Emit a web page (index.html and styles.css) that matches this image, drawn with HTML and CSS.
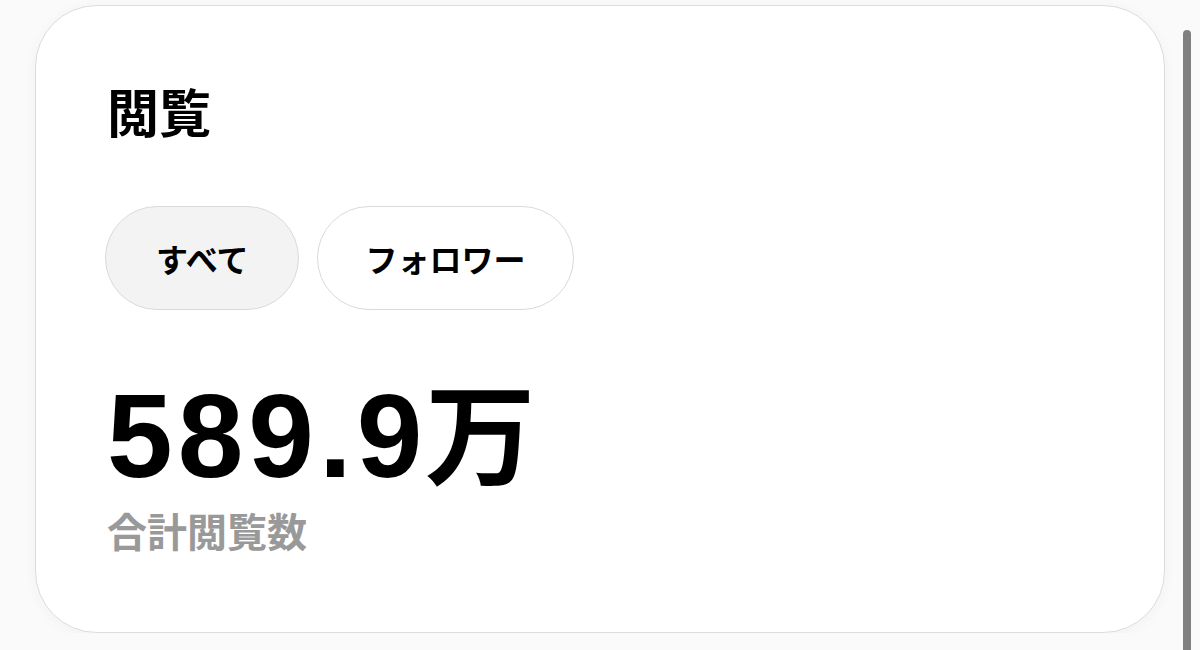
FILE: index.html
```html
<!DOCTYPE html>
<html lang="ja">
<head>
<meta charset="utf-8">
<link rel="stylesheet" href="styles.css">
</head>
<body>
<div class="page">
  <section class="card">
    <h1 class="title">閲覧</h1>
    <div class="tabs">
      <button class="tab active">すべて</button>
      <button class="tab">フォロワー</button>
    </div>
    <div class="value"><span class="num">589.9</span><span class="unit">万</span></div>
    <div class="label">合計閲覧数</div>
  </section>
</div>
<div class="scrollbar"></div>
</body>
</html>
```
FILE: styles.css
```css
html, body {
  margin: 0;
  padding: 0;
  background: #fafafa;
  font-family: "Noto Sans CJK JP", "Noto Sans", sans-serif;
  overflow: hidden;
}
.page {
  padding: 5px 35px 0 35px;
  width: 1130px;
}
.card {
  box-sizing: border-box;
  width: 1130px;
  height: 628px;
  background: #fff;
  border: 1px solid #dcdcdc;
  border-radius: 62px;
  box-shadow: 0 2px 14px rgba(0,0,0,0.04);
  padding: 74px 72px 0 71px;
}
.title {
  margin: 0;
  font-size: 52px;
  line-height: 62px;
  font-weight: 700;
  color: #000;
}
.tabs {
  display: flex;
  gap: 18px;
  margin-top: 64px;
  margin-left: -2px;
}
.tab {
  height: 104px;
  border: 1px solid #dadada;
  border-radius: 52px;
  background: #fff;
  font-family: "Noto Sans CJK JP", sans-serif;
  font-size: 32px;
  font-weight: 700;
  color: #000;
  padding: 0 47px;
}
.tab.active {
  background: #f3f3f3;
  padding: 0 50px;
}
.value {
  margin-top: 54px;
  font-size: 118px;
  line-height: 130px;
  font-weight: 700;
  color: #000;
  display: flex;
  align-items: baseline;
}
.num {
  font-family: "Liberation Sans", Arial, sans-serif;
  letter-spacing: 5px;
}
.unit {
  font-family: "Noto Sans CJK JP", sans-serif;
  font-size: 110px;
  margin-left: -2px;
}
.label {
  margin-top: 5px;
  font-size: 40px;
  line-height: 48px;
  font-weight: 700;
  color: #999;
}
.scrollbar {
  position: fixed;
  left: 1183px;
  top: 30px;
  width: 8px;
  height: 640px;
  background: #808080;
  border-radius: 4px;
}
```
